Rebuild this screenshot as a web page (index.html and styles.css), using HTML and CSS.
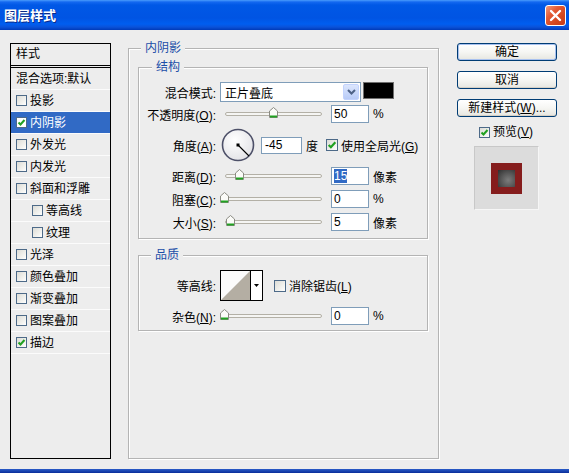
FILE: index.html
```html
<!DOCTYPE html>
<html lang="zh-CN">
<head>
<meta charset="utf-8">
<title>图层样式</title>
<link rel="stylesheet" href="styles.css">
</head>
<body>
<div class="window">
  <div class="titlebar">
    <span class="title">图层样式</span>
    <span class="close"><svg width="13" height="13" viewBox="0 0 13 13"><path d="M2 2 L11 11 M11 2 L2 11" stroke="#fff" stroke-width="2.4" stroke-linecap="round"/></svg></span>
  </div>
  <div class="main-area">
    <div class="stylelist">
      <div class="list-head">样式</div>
      <div class="item">混合选项:默认</div>
      <div class="item"><span class="cb"></span>投影</div>
      <div class="item sel"><span class="cb"><svg width="9" height="9" viewBox="0 0 9 9"><path d="M1.5 4.5 L3.5 6.5 L7.5 2" fill="none" stroke="#21a121" stroke-width="2"/></svg></span>内阴影</div>
      <div class="item"><span class="cb"></span>外发光</div>
      <div class="item"><span class="cb"></span>内发光</div>
      <div class="item"><span class="cb"></span>斜面和浮雕</div>
      <div class="item sub"><span class="cb"></span>等高线</div>
      <div class="item sub"><span class="cb"></span>纹理</div>
      <div class="item"><span class="cb"></span>光泽</div>
      <div class="item"><span class="cb"></span>颜色叠加</div>
      <div class="item"><span class="cb"></span>渐变叠加</div>
      <div class="item"><span class="cb"></span>图案叠加</div>
      <div class="item"><span class="cb"><svg width="9" height="9" viewBox="0 0 9 9"><path d="M1.5 4.5 L3.5 6.5 L7.5 2" fill="none" stroke="#21a121" stroke-width="2"/></svg></span>描边</div>
    </div>

    <div class="group main">
      <div class="gtitle t-main">内阴影</div>
      <div class="group sub struct">
        <div class="gtitle t-sub">结构</div>
        <div class="row r-blend">
          <span class="lbl">混合模式:</span>
          <div class="select"><span class="sel-text">正片叠底</span><span class="dd"><svg width="9" height="6" viewBox="0 0 9 6"><path d="M1 1 L4.5 4.5 L8 1" fill="none" stroke="#4d6185" stroke-width="2"/></svg></span></div>
          <span class="swatch"></span>
        </div>
        <div class="row r-opacity">
          <span class="lbl">不透明度(<u>O</u>):</span>
          <div class="slider"><div class="track"></div><svg class="thumb" style="left:49px" width="9" height="11" viewBox="0 0 9 11"><path d="M0.5 10.5 V4 L4.5 0.5 L8.5 4 V10.5 Z" fill="#fbfbf8" stroke="#8b8b83"/><path d="M1 9.5 H8" stroke="#21a121" stroke-width="2"/></svg></div>
          <span class="input">50</span><span class="unit">%</span>
        </div>
        <div class="row r-angle">
          <span class="lbl">角度(<u>A</u>):</span>
          <svg class="dial" width="34" height="34" viewBox="0 0 34 34"><defs><radialGradient id="dg" cx="0.4" cy="0.35" r="0.7"><stop offset="0" stop-color="#ffffff"/><stop offset="1" stop-color="#e2e2e6"/></radialGradient></defs><circle cx="17" cy="17" r="15.5" fill="url(#dg)" stroke="#4d5068" stroke-width="1.6"/><rect x="15.5" y="15.5" width="3" height="3" fill="#000"/><path d="M17 17 L28 28" stroke="#000" stroke-width="1.1"/></svg>
          <span class="input angle">-45</span><span class="unit deg">度</span>
          <span class="cb big chk"><svg width="10" height="10" viewBox="0 0 9 9"><path d="M1.5 4.5 L3.5 6.5 L7.5 2" fill="none" stroke="#21a121" stroke-width="2"/></svg></span><span class="cbtext">使用全局光(<u>G</u>)</span>
        </div>
        <div class="row r-dist">
          <span class="lbl">距离(<u>D</u>):</span>
          <div class="slider"><div class="track"></div><svg class="thumb" style="left:15px" width="9" height="11" viewBox="0 0 9 11"><path d="M0.5 10.5 V4 L4.5 0.5 L8.5 4 V10.5 Z" fill="#fbfbf8" stroke="#8b8b83"/><path d="M1 9.5 H8" stroke="#21a121" stroke-width="2"/></svg></div>
          <span class="input"><span class="hl">15</span></span><span class="unit">像素</span>
        </div>
        <div class="row r-choke">
          <span class="lbl">阻塞(<u>C</u>):</span>
          <div class="slider"><div class="track"></div><svg class="thumb" style="left:0px" width="9" height="11" viewBox="0 0 9 11"><path d="M0.5 10.5 V4 L4.5 0.5 L8.5 4 V10.5 Z" fill="#fbfbf8" stroke="#8b8b83"/><path d="M1 9.5 H8" stroke="#21a121" stroke-width="2"/></svg></div>
          <span class="input">0</span><span class="unit">%</span>
        </div>
        <div class="row r-size">
          <span class="lbl">大小(<u>S</u>):</span>
          <div class="slider"><div class="track"></div><svg class="thumb" style="left:6px" width="9" height="11" viewBox="0 0 9 11"><path d="M0.5 10.5 V4 L4.5 0.5 L8.5 4 V10.5 Z" fill="#fbfbf8" stroke="#8b8b83"/><path d="M1 9.5 H8" stroke="#21a121" stroke-width="2"/></svg></div>
          <span class="input">5</span><span class="unit">像素</span>
        </div>
      </div>

      <div class="group sub quality">
        <div class="gtitle t-q">品质</div>
        <div class="row r-contour">
          <span class="lbl">等高线:</span>
          <div class="contour">
            <svg class="cprev" width="29" height="29" viewBox="0 0 29 29"><rect width="29" height="29" fill="#fbfbfb"/><path d="M0 29 L29 0 L29 29 Z" fill="#b4aea3"/></svg>
            <span class="carrow"><svg width="5" height="3" viewBox="0 0 5 3"><path d="M0 0 H5 L2.5 3 Z" fill="#000"/></svg></span>
          </div>
          <span class="cb big aa"></span><span class="cbtext">消除锯齿(<u>L</u>)</span>
        </div>
        <div class="row r-noise">
          <span class="lbl">杂色(<u>N</u>):</span>
          <div class="slider"><div class="track"></div><svg class="thumb" style="left:0px" width="9" height="11" viewBox="0 0 9 11"><path d="M0.5 10.5 V4 L4.5 0.5 L8.5 4 V10.5 Z" fill="#fbfbf8" stroke="#8b8b83"/><path d="M1 9.5 H8" stroke="#21a121" stroke-width="2"/></svg></div>
          <span class="input">0</span><span class="unit">%</span>
        </div>
      </div>
    </div>

    <div class="side">
      <div class="btn default">确定</div>
      <div class="btn">取消</div>
      <div class="btn">新建样式(<u>W</u>)...</div>
      <div class="preview-chk"><span class="cb"><svg width="9" height="9" viewBox="0 0 9 9"><path d="M1.5 4.5 L3.5 6.5 L7.5 2" fill="none" stroke="#21a121" stroke-width="2"/></svg></span><span>预览(<u>V</u>)</span></div>
      <div class="preview"><div class="pv-red"><div class="pv-inner"></div></div></div>
    </div>
  </div>
  <div class="bottom"></div>
</div>
</body>
</html>
```

FILE: styles.css
```css
* { box-sizing: border-box; }
html, body { margin: 0; padding: 0; }
body {
  width: 569px; height: 473px; overflow: hidden;
  background: #ededed;
  font-family: "Liberation Sans", "Noto Sans CJK SC", sans-serif;
  font-size: 12px; color: #000;
}
.window { width: 569px; height: 473px; display: flex; flex-direction: column; }

/* title bar */
.titlebar {
  height: 30px; flex: none; display: flex; align-items: center;
  background: linear-gradient(#4a9cfc 0, #1468f0 2px, #0058e6 5px, #0054e3 18px, #005ef0 24px, #0a52da 27px, #003ab8 30px);
}
.title {
  color: #fff; font-weight: bold; font-size: 13px; line-height: 16px;
  padding-left: 4px; font-family: "Noto Sans CJK SC", sans-serif;
  text-shadow: 1px 1px 0 #0b2a8a;
}
.close {
  margin-left: auto; margin-right: 3px; margin-top: 1px;
  width: 21px; height: 21px; border: 1px solid #fff; border-radius: 3px;
  background: linear-gradient(135deg, #f29a7c 0, #e35a35 35%, #d3461e 70%, #c83c18 100%);
  display: flex; align-items: center; justify-content: center;
}

.main-area { height: 439px; flex: none; display: flex; align-items: flex-start; }
.bottom { height: 4px; flex: none; background: linear-gradient(#2a5cc8, #0a2d9a); }

/* style list */
.stylelist {
  margin: 13px 0 0 10px; width: 101px; height: 416px;
  border: 1px solid #000; background: #ededed;
}
.list-head {
  height: 24px; line-height: 21px; padding-left: 5px;
  border-bottom: 3px double #000;
}
.item {
  height: 22px; border-bottom: 1px solid #fbfbfb;
  display: flex; align-items: center; padding-left: 5px; line-height: 14px;
}
.item.sub { padding-left: 21px; }
.item.sel { background: #316ac5; color: #fff; }
.cb {
  flex: none; width: 11px; height: 11px; margin-right: 3px;
  border: 1px solid #4d6a88;
  background: linear-gradient(135deg, #dcdcd6 0, #f4f4f1 70%, #fff 100%);
  display: flex; align-items: center; justify-content: center;
}
.item.sel .cb { background: #fff; }
.cb.big { width: 12px; height: 12px; }

/* group boxes */
.group {
  border: 1px solid #b4b4b4;
  box-shadow: 1px 1px 0 #fff, inset 1px 1px 0 #fff;
}
.group.main { margin: 18px 0 0 17px; width: 311px; height: 411px; }
.gtitle {
  width: fit-content; height: 14px; line-height: 14px;
  margin-top: -8px; padding: 0 4px; background: #ededed; color: #1b4ea8;
}
.t-main { margin-left: 12px; }
.t-sub { margin-left: 13px; }
.t-q { margin-left: 12px; }
.group.sub { margin-left: 9px; width: 290px; }
.struct { margin-top: 12px; height: 172px; }
.quality { margin-top: 16px; height: 76px; }

.row { display: flex; align-items: center; height: 20px; }
.lbl { width: 77px; margin-right: 4px; text-align: right; white-space: nowrap; flex: none; }
.r-blend { margin-top: 8px; }
.r-opacity { margin-top: 2px; }
.r-angle { margin-top: 4px; height: 34px; }
.r-dist { margin-top: 4px; }
.r-choke { margin-top: 3px; }
.r-size { margin-top: 3px; }
.r-contour { margin-top: 8px; height: 31px; }
.r-noise { margin-top: 5px; }

.select {
  width: 141px; height: 20px; border: 1px solid #7f9db9; background: #fff;
  display: flex; align-items: center; justify-content: space-between;
  padding: 1px;
}
.sel-text { padding-left: 3px; }
.dd {
  width: 16px; height: 16px; border: 1px solid #c3d3fd; border-radius: 2px;
  background: linear-gradient(#dce6fd, #b8cbf7);
  display: flex; align-items: center; justify-content: center;
}
.swatch {
  align-self: flex-start; margin-left: 2px;
  width: 31px; height: 17px; background: #000; border: 1px solid #6f6f6f;
}

.slider { position: relative; width: 111px; height: 20px; display: flex; align-items: center; flex: none; }
.track {
  margin-left: 5px; width: 97px; height: 4px;
  border: 1px solid #b3b0a6; border-radius: 2px; background: #f5f5f3;
}
.thumb { position: absolute; top: 3px; }

.input {
  flex: none; width: 38px; height: 18px; border: 1px solid #7f9db9; background: #fff;
  line-height: 16px; padding-left: 2px; font-size: 12px;
}
.input.angle { width: 41px; height: 17px; line-height: 15px; margin-left: 6px; padding-left: 3px; }
.hl { background: #316ac5; color: #fff; }
.unit { margin-left: 4px; }
.deg { margin-left: 4px; margin-right: 8px; }
.dial { flex: none; margin-left: 1px; }
.cbtext { white-space: nowrap; }

.contour {
  flex: none; margin-left: 0; width: 43px; height: 31px;
  border: 1px solid #000; display: flex; background: #fff;
}
.cprev { display: block; flex: none; }
.carrow {
  flex: 1; border-left: 1px solid #000; background: #fff;
  display: flex; align-items: center; justify-content: center;
}
.aa { margin-left: 11px; }

/* side */
.side { margin: 13px 0 0 18px; width: 100px; display: flex; flex-direction: column; }
.btn {
  height: 18px; line-height: 16px; text-align: center; margin-bottom: 10px;
  border: 1px solid #003c74; border-radius: 3px;
  background: linear-gradient(#ffffff 0, #f6f6f3 50%, #e6e6e0 100%);
  box-shadow: inset 0 -1px 0 #d6d0c5;
}
.btn.default { box-shadow: inset 0 0 0 1px #a8c1ef, inset 0 -1px 0 #7a9ee0; }
.preview-chk {
  margin-top: -2px; height: 14px; display: flex; align-items: center; justify-content: center;
  line-height: 14px; padding-right: 2px;
}
.preview {
  margin: 7px 0 0 17px; width: 65px; height: 64px;
  background: #dcdcdc; border: 1px solid; border-color: #c8c8c8 #f6f6f6 #f6f6f6 #c8c8c8;
  display: flex; align-items: center; justify-content: center;
}
.pv-red {
  width: 31px; height: 31px; background: #851d1d;
  display: flex; align-items: center; justify-content: center;
}
.pv-inner {
  width: 17px; height: 17px;
  background: radial-gradient(circle at 60% 60%, #7c7c7c 0, #5a5a5a 45%, #2e2e2e 100%);
}
```
